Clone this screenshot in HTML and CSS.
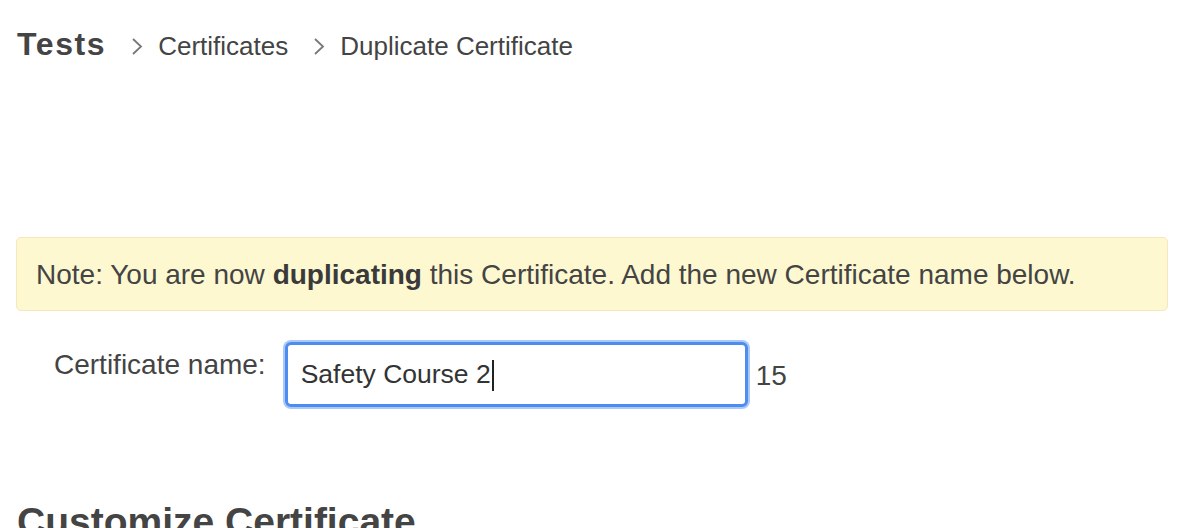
FILE: index.html
```html
<!DOCTYPE html>
<html lang="en">
<head>
<meta charset="utf-8">
<title>Duplicate Certificate</title>
<link rel="stylesheet" href="styles.css">
</head>
<body>
  <nav class="crumbs">
    <span class="crumb-root">Tests</span>
    <svg class="chev" width="12" height="18" viewBox="0 0 12 18"><path d="M2 2 L10 9.5 L2 17" fill="none" stroke="#777" stroke-width="1.8"/></svg>
    <a class="crumb">Certificates</a>
    <svg class="chev" width="12" height="18" viewBox="0 0 12 18"><path d="M2 2 L10 9.5 L2 17" fill="none" stroke="#777" stroke-width="1.8"/></svg>
    <span class="crumb">Duplicate Certificate</span>
  </nav>

  <div class="alert">Note: You are now <strong>duplicating</strong> this Certificate. Add the new Certificate name below.</div>

  <div class="form-row">
    <label class="label" for="certname">Certificate name:</label>
    <div class="input-wrap">
      <input class="name-input" id="certname" type="text" value="Safety Course 2"><span class="caret"></span>
    </div>
    <span class="count">15</span>
  </div>

  <h2 class="section-title">Customize Certificate</h2>
</body>
</html>
```

FILE: styles.css
```css
html, body {
  margin: 0;
  padding: 0;
  background: #fff;
}
body {
  font-family: "Liberation Sans", Arial, sans-serif;
  color: #444;
  padding: 0 32px 0 16px;
  overflow: hidden;
}
.crumbs {
  display: flex;
  align-items: baseline;
  padding-top: 25px;
  line-height: 1.2;
}
.crumb-root {
  font-size: 32px;
  font-weight: bold;
  letter-spacing: 1.6px;
  margin-left: 1px;
  color: #444;
}
.chev {
  margin: 0 15px 0 25px;
  align-self: flex-end;
  margin-bottom: 8px;
}
.crumb {
  font-size: 26px;
  color: #444;
}
.alert {
  margin-top: 174px;
  background: #fdf8d0;
  border: 1px solid #f6e7bc;
  border-radius: 5px;
  padding: 20px 19px 18px 19px;
  font-size: 28px;
  line-height: 34px;
  color: #444;
}
.alert strong {
  color: #3a3a3a;
}
.form-row {
  display: flex;
  align-items: flex-start;
  margin-top: 31px;
  padding-left: 38px;
}
.label {
  font-size: 28px;
  line-height: 34px;
  margin-top: 6px;
  margin-right: 19px;
  color: #444;
}
.input-wrap {
  position: relative;
}
.name-input {
  display: block;
  box-sizing: border-box;
  width: 463px;
  height: 65px;
  border: 3px solid #4f8cf0;
  border-radius: 6px;
  box-shadow: 0 0 0 2px #a9c9f9;
  outline: none;
  padding: 0 13px;
  font-family: "Liberation Sans", Arial, sans-serif;
  font-size: 26.5px;
  color: #333;
  margin: 0;
}
.caret {
  position: absolute;
  left: 207px;
  top: 18px;
  width: 2px;
  height: 31px;
  background: #222;
}
.count {
  font-size: 28px;
  line-height: 34px;
  margin-top: 17px;
  margin-left: 8px;
  color: #444;
}
.section-title {
  margin: 92px 0 0 1px;
  font-size: 39px;
  line-height: 1.2;
  font-weight: bold;
  color: #444;
}
```
